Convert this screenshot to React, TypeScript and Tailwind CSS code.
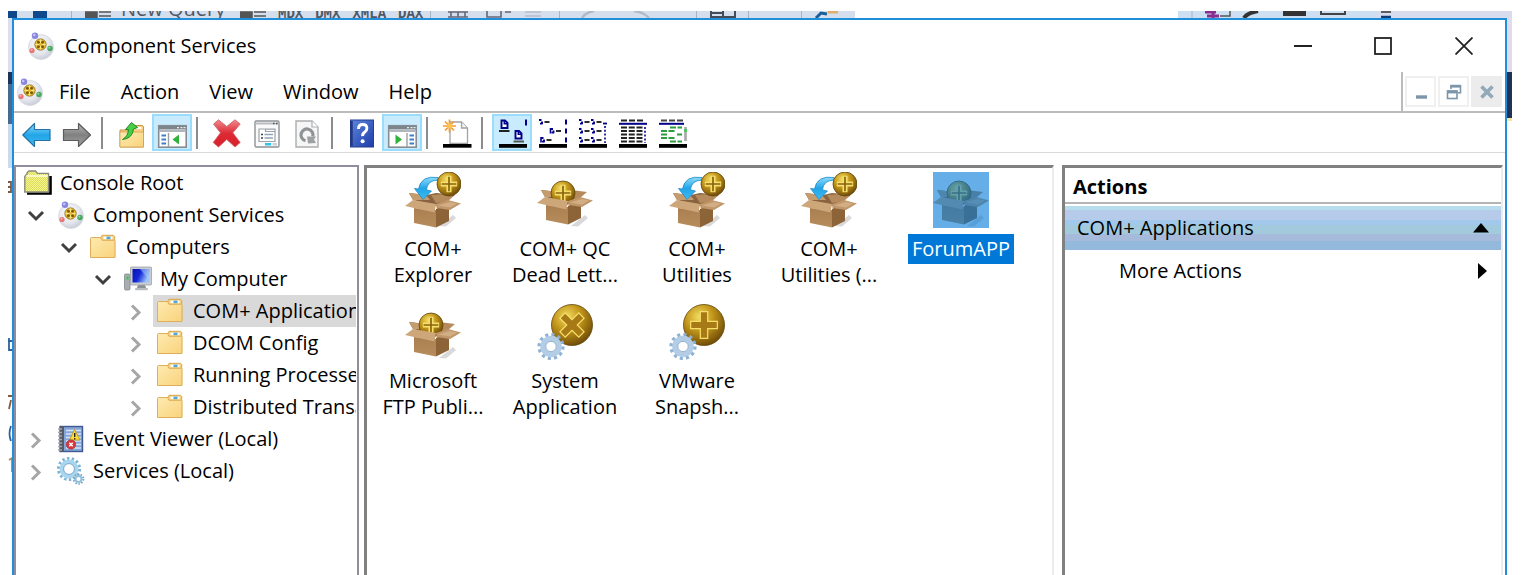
import React from "react";

/* ---------- shared gradients ---------- */

function Defs() {
  return (
    <svg width="0" height="0" className="absolute" aria-hidden="true">
      <defs>
        <radialGradient id="coin" cx="0.38" cy="0.3" r="0.75">
          <stop offset="0" stopColor="#f3dc62" />
          <stop offset="0.45" stopColor="#c2961a" />
          <stop offset="1" stopColor="#6b4706" />
        </radialGradient>
        <linearGradient id="boxFront" x1="0" y1="0" x2="0" y2="1">
          <stop offset="0" stopColor="#a97f52" />
          <stop offset="1" stopColor="#b88d5c" />
        </linearGradient>
        <linearGradient id="blueArrow" x1="0" y1="0" x2="0" y2="1">
          <stop offset="0" stopColor="#8fdcf8" />
          <stop offset="0.5" stopColor="#22a5e8" />
          <stop offset="1" stopColor="#3cbcf2" />
        </linearGradient>
        <linearGradient id="grayArrow" x1="0" y1="0" x2="0" y2="1">
          <stop offset="0" stopColor="#b8b8b8" />
          <stop offset="0.5" stopColor="#808080" />
          <stop offset="1" stopColor="#a4a4a4" />
        </linearGradient>
        <linearGradient id="folder" x1="0" y1="0" x2="1" y2="1">
          <stop offset="0" stopColor="#fdeab0" />
          <stop offset="1" stopColor="#fad37c" />
        </linearGradient>
        <linearGradient id="redX" x1="0" y1="0" x2="0" y2="1">
          <stop offset="0" stopColor="#f08a8e" />
          <stop offset="0.5" stopColor="#dd2a34" />
          <stop offset="1" stopColor="#d8202b" />
        </linearGradient>
        <linearGradient id="helpBlue" x1="0" y1="0" x2="1" y2="1">
          <stop offset="0" stopColor="#5f86e0" />
          <stop offset="1" stopColor="#1c3da6" />
        </linearGradient>
        <linearGradient id="screen" x1="0" y1="0" x2="1" y2="0.4">
          <stop offset="0" stopColor="#0a14a8" />
          <stop offset="0.5" stopColor="#1428d8" />
          <stop offset="1" stopColor="#9cc4f8" />
        </linearGradient>
        <radialGradient id="disc" cx="0.4" cy="0.35" r="0.7">
          <stop offset="0" stopColor="#fafafc" />
          <stop offset="0.6" stopColor="#e6e8ee" />
          <stop offset="1" stopColor="#c4c9d4" />
        </radialGradient>
        <pattern id="dither" width="2" height="2" patternUnits="userSpaceOnUse">
          <rect width="2" height="2" fill="#f6f68c" />
          <rect width="1" height="1" fill="#dcdc5c" />
          <rect x="1" y="1" width="1" height="1" fill="#dcdc5c" />
        </pattern>
      </defs>
    </svg>
  );
}

/* ---------- small icons ---------- */

function ComponentIcon() {
  return (
    <svg width="28" height="28" viewBox="0 0 28 28" aria-hidden="true">
      <ellipse cx="14" cy="15" rx="12.500" ry="12.500" fill="url(#disc)" stroke="#d4d7de" strokeWidth="0.8" />
      <circle cx="13.500" cy="12.500" r="5.600" fill="#eabf2c" stroke="#8c6a14" strokeWidth="0.900" />
      <path d="M13.500 7.500v3.500M13.500 14v3.500M8.500 12.500h3.500M15 12.500h3.500" stroke="#fbe78a" strokeWidth="1.500" />
      <path d="M10.500 9.500q2-1.500 2 1.500q-3 1-2-1.500M16.500 9.500q-2-1.500-2 1.500q3 1 2-1.500M10.500 15.500q2 1.500 2-1.500q-3-1-2 1.500M16.500 15.500q-2 1.500-2-1.500q3-1 2 1.500" fill="#7a5608" stroke="#7a5608" strokeWidth="0.800" />
      <circle cx="8" cy="3.800" r="3.200" fill="#8886e0" />
      <circle cx="7.200" cy="3" r="1.300" fill="#c3c3f6" />
      <circle cx="5" cy="18.500" r="2.600" fill="#e87474" />
      <circle cx="4.600" cy="17.800" r="1" fill="#f8b4b4" />
      <circle cx="23" cy="16.500" r="2.700" fill="#48a860" />
      <circle cx="22.400" cy="15.800" r="1" fill="#93d8a4" />
    </svg>
  );
}

function ConsoleFolderIcon() {
  return (
    <svg width="28" height="28" viewBox="0 0 28 28" aria-hidden="true">
      <path d="M3 24.500h23.500V7" fill="none" stroke="#000" strokeWidth="2.600" />
      <path d="M.8 7.500l2.400-3V3.600L5 2h6.500l2 2.400h11V23H.8z" fill="url(#dither)" stroke="#8a8a7c" strokeWidth="1.400" />
      <path d="M2.200 7h21.600" stroke="#fdfde0" strokeWidth="1.600" />
    </svg>
  );
}

function FolderIcon() {
  return (
    <svg width="28" height="28" viewBox="1 0 28 28" aria-hidden="true">
      <path d="M11.500 5l1.500-2.700h11.500l1.200 1.200V24H2z" fill="#f6cf7a" stroke="#d9a64c" strokeWidth="1" />
      <rect x="14.500" y="3.600" width="9" height="2.600" fill="#fff" />
      <rect x="17.500" y="3.600" width="4" height="2.600" fill="#4aa8dc" />
      <path d="M1.500 5.500q0-1 1-1h9l1.500 2.800h12.200q.8 0 .8 1V24.500h-24.500z" fill="url(#folder)" stroke="#dfae58" strokeWidth="1" />
    </svg>
  );
}

function ComputerIcon() {
  return (
    <svg width="28" height="28" viewBox="0 0 28 28" aria-hidden="true">
      <rect x="0.500" y="9" width="5.500" height="16" rx="1.200" fill="#a9adb2" stroke="#85898f" strokeWidth="0.8" />
      <rect x="2.500" y="11.500" width="2" height="3" fill="#2ccf3c" />
      <path d="M14 20h7l1.500 4H12.500z" fill="#8d9197" />
      <rect x="11" y="23" width="13" height="2.300" rx="1" fill="#b8bcc1" />
      <rect x="6.500" y="2" width="21" height="18" rx="0.800" fill="#c9ccd0" stroke="#9da1a6" strokeWidth="0.8" />
      <rect x="8.500" y="4" width="17" height="13.500" fill="url(#screen)" />
      <path d="M16 4h9.500v11.500z" fill="#a9c8f4" opacity="0.550" />
    </svg>
  );
}

function EventViewerIcon() {
  return (
    <svg width="28" height="28" viewBox="0 0 28 28" aria-hidden="true">
      <rect x="3" y="1.500" width="22.500" height="25" fill="#85a6d8" stroke="#3f5a92" strokeWidth="1.400" />
      <path d="M9 5.500h15M9 9h15M9 12.500h15M9 16h15M9 19.500h15M9 23h15" stroke="#d6e4f6" strokeWidth="1.400" />
      <rect x="3" y="1.500" width="4" height="25" fill="#565b66" />
      <path d="M1 4h4M1 7.500h4M1 11h4M1 14.500h4M1 18h4M1 21.500h4M1 25h4" stroke="#a4a8b0" strokeWidth="1.400" />
      <path d="M17.500 4.500L23 15H12.500z" fill="#fbdc3a" stroke="#c19a10" strokeWidth="0.900" />
      <path d="M17.700 8v4M17.700 13v1.400" stroke="#222" strokeWidth="1.400" />
      <circle cx="14" cy="19.500" r="4.600" fill="#d93a40" stroke="#a82028" strokeWidth="0.700" />
      <path d="M12.300 17.800l3.400 3.400M15.700 17.800l-3.400 3.400" stroke="#fff" strokeWidth="1.400" />
    </svg>
  );
}

function ServicesIcon() {
  return (
    <svg width="28" height="28" viewBox="0 0 28 28" aria-hidden="true">
      <circle cx="12" cy="12" r="10.600" fill="none" stroke="#7db2d4" strokeWidth="3" strokeDasharray="2.400 2.360" />
      <circle cx="12" cy="12" r="7.400" fill="#fff" stroke="#a8d6ee" strokeWidth="4" />
      <circle cx="12" cy="12" r="5.400" fill="#fff" stroke="#6f9fc2" strokeWidth="0.900" />
      <circle cx="21.500" cy="22" r="4.800" fill="none" stroke="#7ba9c8" strokeWidth="2" strokeDasharray="1.500 1.510" />
      <circle cx="21.500" cy="22" r="3" fill="#fff" stroke="#94c0dc" strokeWidth="2" />
    </svg>
  );
}

/* ---------- toolbar icons ---------- */

function ToolSvg({ children }: { children: React.ReactNode }) {
  return (
    <svg width="30" height="30" viewBox="0 0 30 30" aria-hidden="true">
      {children}
    </svg>
  );
}

const BackGlyph = () => (
  <ToolSvg>
    <path d="M.8 17L12.500 5.500V11.500H28V22.500H12.500V28.500z" fill="url(#blueArrow)" stroke="#2472a8" strokeWidth="1.200" strokeLinejoin="round" />
  </ToolSvg>
);

const ForwardGlyph = () => (
  <ToolSvg>
    <path d="M28.500 17L16.500 5.500V11.500H1.500V22.500H16.500V28.500z" fill="url(#grayArrow)" stroke="#5c5c5c" strokeWidth="1.200" strokeLinejoin="round" />
  </ToolSvg>
);

const UpFolderGlyph = () => (
  <ToolSvg>
    <path d="M3 12h9l2-4.500h11.500l1 1.500V29H3z" fill="#f8cf80" stroke="#c79846" strokeWidth="1" />
    <path d="M3 14h23.500v15H3z" fill="url(#folder)" stroke="#cfa254" strokeWidth="0.800" />
    <rect x="19" y="9" width="5.500" height="2" fill="#fff" />
    <path d="M5.500 21.500Q11 18.500 11.500 11.500H8.500L14.500 4.500L20.500 9.500L16.500 11Q15.500 20.500 5.500 21.500z" fill="#46cf46" stroke="#1d8a26" strokeWidth="1" strokeLinejoin="round" />
  </ToolSvg>
);

const TreePaneGlyph = () => (
  <ToolSvg>
    <rect x="1.700" y="7.700" width="27.500" height="21.500" fill="#fff" stroke="#878c92" strokeWidth="1.600" />
    <path d="M2 8h27v3.500H2z" fill="#7c848c" />
    <path d="M20 9.600h2M23.500 9.600h2M26.500 9.600h2" stroke="#e8ecf0" strokeWidth="1.200" />
    <path d="M2 13h27" stroke="#b0b6bc" strokeWidth="2" />
    <path d="M11.500 15v14" stroke="#9aa0a6" strokeWidth="1.400" />
    <path d="M4.500 17.500h4.500M4.500 21.500h4.500M4.500 25.500h4.500" stroke="#3c7fc4" strokeWidth="2" />
    <path d="M22 16.500v10l-6.500-5z" fill="#2fb23a" />
  </ToolSvg>
);

const ActionPaneGlyph = () => (
  <ToolSvg>
    <rect x="1.700" y="7.700" width="27.500" height="21.500" fill="#fff" stroke="#878c92" strokeWidth="1.600" />
    <path d="M2 8h27v3.500H2z" fill="#7c848c" />
    <path d="M20 9.600h2M23.500 9.600h2M26.500 9.600h2" stroke="#e8ecf0" strokeWidth="1.200" />
    <path d="M2 13h27" stroke="#b0b6bc" strokeWidth="2" />
    <path d="M20 15v14" stroke="#9aa0a6" strokeWidth="1.400" />
    <path d="M22.500 17.500h4.500M22.500 21.500h4.500M22.500 25.500h4.500" stroke="#3c7fc4" strokeWidth="2" />
    <path d="M8.500 16.500v10l6.500-5z" fill="#2fb23a" />
  </ToolSvg>
);

const DeleteGlyph = () => (
  <ToolSvg>
    <path d="M1.500 6L6.500 1.800L14.700 8.500L23 1.800L28.200 6L20.800 14.800L28.200 24.500L23 29L14.700 21.500L6.500 29L1.200 24.500L8.500 14.800z" fill="url(#redX)" stroke="#d0646c" strokeWidth="0.900" strokeLinejoin="round" />
  </ToolSvg>
);

const PropertiesGlyph = () => (
  <ToolSvg>
    <rect x="3" y="3" width="24" height="26" rx="1.200" fill="#fafafa" stroke="#8e9296" strokeWidth="1.400" />
    <path d="M3.500 5.500h23" stroke="#b8bcc0" strokeWidth="2" />
    <path d="M21 5.500h1.500M24 5.500h1.500" stroke="#4c5258" strokeWidth="1.400" />
    <path d="M7 23.500V11h6.500v2.500h9.500v10z" fill="#fff" stroke="#9da3a9" strokeWidth="1.200" />
    <path d="M14 11.200h9v2" fill="none" stroke="#9da3a9" strokeWidth="1.200" />
    <path d="M9 16.500h2M9 20h2" stroke="#3b4248" strokeWidth="1.500" />
    <path d="M12.500 16.500h8.500M12.500 20h8.500" stroke="#8fa4b8" strokeWidth="1.500" />
    <rect x="13" y="25" width="6" height="2.500" fill="#2fc4ea" />
    <rect x="20.500" y="25" width="4.500" height="2.500" fill="#ccd2d6" />
  </ToolSvg>
);

const RefreshGlyph = () => (
  <ToolSvg>
    <path d="M4 3h16l6 6v20H4z" fill="#f6f6f6" stroke="#aaadb0" strokeWidth="1.400" />
    <path d="M20 3v6h6" fill="#fff" stroke="#aaadb0" strokeWidth="1.200" />
    <path d="M13.500 22.800A6 6 0 1 1 20.800 18.500" fill="none" stroke="#8f9396" strokeWidth="3.200" />
    <path d="M15 18.500h9l-2 3 2 3.500-8 .5z" fill="#9da1a4" />
  </ToolSvg>
);

const HelpGlyph = () => (
  <ToolSvg>
    <rect x="3.500" y="2" width="23" height="27" fill="url(#helpBlue)" stroke="#24408e" strokeWidth="1" />
    <path d="M4.500 3v25" stroke="#223880" strokeWidth="2.500" />
    <path d="M11.500 11q0-4.500 4.200-4.500t4.200 3.800q0 2.400-2.300 3.900t-2 4" fill="none" stroke="#fff" strokeWidth="2.900" />
    <circle cx="15.600" cy="23.300" r="2" fill="#fff" />
  </ToolSvg>
);

const NewDocGlyph = () => (
  <ToolSvg>
    <path d="M8 4h11.500l6 6v15.500H8z" fill="#fff" stroke="#a2a2a2" strokeWidth="1.300" />
    <path d="M19.500 4v6h6" fill="#f0f0f0" stroke="#a2a2a2" strokeWidth="1.300" />
    <rect x="1" y="26" width="28.500" height="3.700" fill="#000" />
    <path d="M7.500 1.500v13M1 8h13M3 3.500l9 9M12 3.500l-9 9" stroke="#f79a2c" strokeWidth="1.700" />
    <circle cx="7.500" cy="8" r="2.700" fill="#ffc24c" />
  </ToolSvg>
);

const Doc = ({ x, y }: { x: number; y: number }) => (
  <g transform={`translate(${x} ${y})`}>
    <path d="M0 0h3.500l2.500 2.500v5H0z" fill="#fff" stroke="#00008b" strokeWidth="1.900" />
    <path d="M2.800 0v3.200h3.200" fill="none" stroke="#00008b" strokeWidth="1.500" />
  </g>
);
const Base = () => <rect x="2" y="26" width="28" height="3.800" fill="#000" />;

const LargeIconsGlyph = () => (
  <ToolSvg>
    <Doc x={4.500} y={2.500} />
    <path d="M2 13h10.500" stroke="#222" strokeWidth="2" />
    <Doc x={18.500} y={13} />
    <path d="M16.500 23.500h10.500" stroke="#555" strokeWidth="2" />
    <path d="M29 1.500v6" stroke="#00008b" strokeWidth="2" />
    <Base />
  </ToolSvg>
);

const Mini = ({ x, y }: { x: number; y: number }) => (
  <>
    <path d={`M${x} ${y}h2.500M${x + 1} ${y + 3.600}h2.600M${x + 3} ${y + 1.500}v2.500`} fill="none" stroke="#00008b" strokeWidth="1.900" />
    <path d={`M${x + 5.500} ${y + 2}h5`} stroke="#222" strokeWidth="1.900" />
  </>
);

const SmallIconsGlyph = () => (
  <ToolSvg>
    <Mini x={2} y={2} />
    <Mini x={13.500} y={11} />
    <Mini x={4} y={20} />
    <path d="M13.500 10v5.500M4 19v5.500" stroke="#00008b" strokeWidth="1.600" />
    <path d="M29 1.500v5M29 10.500v5M29 19.500v5" stroke="#00008b" strokeWidth="2" />
    <Base />
  </ToolSvg>
);

const ListGlyph = () => (
  <ToolSvg>
    {[2, 11, 20].map((y) => (
      <g key={y}>
        <Mini x={2} y={y} />
        <Mini x={14} y={y} />
      </g>
    ))}
    <path d="M26 5.500h4" stroke="#00008b" strokeWidth="1.800" />
    <path d="M28 8v17" stroke="#00008b" strokeWidth="1.600" strokeDasharray="2 1.800" />
    <Base />
  </ToolSvg>
);

const DetailGlyph = () => (
  <ToolSvg>
    <path d="M4 2.500h22" stroke="#222" strokeWidth="2" strokeDasharray="6 2" />
    <path d="M2 5.800h28" stroke="#00008b" strokeWidth="2" />
    {[9.5, 13, 16.5, 20, 23.5].map((y) => (
      <path key={y} d={`M4 ${y}h21.500`} stroke="#222" strokeWidth="2.200" strokeDasharray="6 1.750" />
    ))}
    <path d="M28 9v16" stroke="#00008b" strokeWidth="1.600" strokeDasharray="2 1.800" />
    <Base />
  </ToolSvg>
);

const StatusGlyph = () => (
  <ToolSvg>
    <path d="M4 2.500h22" stroke="#444" strokeWidth="2" strokeDasharray="6 2" />
    <path d="M2 5.800h25" stroke="#00008b" strokeWidth="2" />
    <path d="M13 9.500h12M4 13h14M4 16.500h6M20 16.500h5M4 20h14M13 23.500h12" stroke="#2f9c40" strokeWidth="2.200" strokeDasharray="6 1.500" />
    <path d="M28.500 9v14" stroke="#a8a8a8" strokeWidth="2.600" />
    <path d="M28.500 11v3" stroke="#35d050" strokeWidth="2.600" />
    <Base />
  </ToolSvg>
);

/* ---------- application icons ---------- */

function Coin({ cx, cy, r, turn = 0 }: { cx: number; cy: number; r: number; turn?: number }) {
  const big = r > 15;
  const a = r * 0.68;
  const b = a - (big ? 1.2 : 0.8);
  return (
    <g>
      <circle cx={cx} cy={cy} r={r} fill="url(#coin)" stroke="#5f450a" strokeWidth="0.800" />
      <g transform={`rotate(${turn} ${cx} ${cy})`}>
        <path d={`M${cx} ${cy - a}v${2 * a}M${cx - a} ${cy}h${2 * a}`} stroke="#f6de6c" strokeWidth={r * 0.42} />
        <path
          d={`M${cx} ${cy - b}v${2 * b}M${cx - b} ${cy}h${2 * b}`}
          stroke={big ? "#a87a16" : "#8a640e"}
          strokeWidth={big ? r * 0.3 : r * 0.14}
        />
      </g>
    </g>
  );
}

function BoxIcon({ arrow }: { arrow?: boolean }) {
  return (
    <svg width="56" height="56" viewBox="0 0 56 56" aria-hidden="true">
      <path d="M34 54L48 43L51 46L41 54.500z" fill="#c9c9cc" opacity="0.700" />
      <g transform={arrow ? undefined : "translate(0 -3)"}>
        <path d="M4 21l18 2 9-2 11 1 2 7-13 5-23-6z" fill="#8a6440" />
        <path d="M4 21l17 2 4 5-17 0z" fill="#c49c6e" />
        <path d="M26 23l16-1 8 1-7 6-12 2z" fill="#b58a5c" />
        {!arrow && <Coin cx={26} cy={24} r={12} />}
        <path d="M9 36L31 38V55.500L9 51z" fill="url(#boxFront)" />
        <path d="M31 37L44 30V49L31 55.500z" fill="#8d6338" />
        <path d="M0 34L8 28L31 32L29.500 40.500z" fill="#cda67a" />
        <path d="M31 32L43 28L56 31.500L45 38L31.500 36z" fill="#c0976a" />
        <path d="M33 33.500L45 30L52 31.500L45 35.500z" fill="#d3ae84" />
      </g>
      {arrow && (
        <>
          <path d="M33 5.500Q16 3 13.500 17L9.500 16.500L18 27.500L26.500 19L21.500 18Q22 8.500 33 8z" fill="url(#blueArrow)" stroke="#1c8ccc" strokeWidth="0.800" />
          <Coin cx={44} cy={12} r={12} />
        </>
      )}
    </svg>
  );
}

function CoinGearIcon({ turn = 0 }: { turn?: number }) {
  return (
    <svg width="56" height="56" viewBox="0 0 56 56" aria-hidden="true">
      <Coin cx={35} cy={21} r={20.5} turn={turn} />
      <circle cx="14" cy="42.500" r="11.800" fill="none" stroke="#8fb2d4" strokeWidth="3.600" strokeDasharray="3.090 3.090" />
      <circle cx="14" cy="42.500" r="8" fill="#fff" stroke="#b3cde6" strokeWidth="5.500" />
      <circle cx="14" cy="42.500" r="5.200" fill="#fff" stroke="#8aa9c8" strokeWidth="0.900" />
    </svg>
  );
}

/* ---------- toolbar ---------- */

type Tool = { label: string; Glyph: () => React.JSX.Element; on?: boolean };

const toolGroups: Tool[][] = [
  [
    { label: "Back", Glyph: BackGlyph },
    { label: "Forward", Glyph: ForwardGlyph },
  ],
  [
    { label: "Up one level", Glyph: UpFolderGlyph },
    { label: "Show or hide console tree", Glyph: TreePaneGlyph, on: true },
  ],
  [
    { label: "Delete", Glyph: DeleteGlyph },
    { label: "Properties", Glyph: PropertiesGlyph },
    { label: "Refresh", Glyph: RefreshGlyph },
  ],
  [
    { label: "Help", Glyph: HelpGlyph },
    { label: "Show or hide action pane", Glyph: ActionPaneGlyph, on: true },
  ],
  [{ label: "New application", Glyph: NewDocGlyph }],
  [
    { label: "Large icons", Glyph: LargeIconsGlyph, on: true },
    { label: "Small icons", Glyph: SmallIconsGlyph },
    { label: "List view", Glyph: ListGlyph },
    { label: "Detail view", Glyph: DetailGlyph },
    { label: "Status view", Glyph: StatusGlyph },
  ],
];

function Toolbar() {
  return (
    <div role="toolbar" aria-label="Standard" className="flex h-10 items-center border-b border-[#d9d9d9] pl-[3px]">
      {toolGroups.map((group, i) => (
        <React.Fragment key={i}>
          {i > 0 && (
            <div className="flex w-[15px] pl-1">
              <span className="h-8 w-[2px] bg-[#8c8c8c]" />
            </div>
          )}
          {group.map(({ label, Glyph, on }) => (
            <button
              key={label}
              type="button"
              aria-label={label}
              aria-pressed={on ? true : undefined}
              className={
                "flex h-[37px] w-10 items-center justify-center border-2 " +
                (on ? "border-[#99dcfb] bg-[#c8ecfd]" : "border-transparent")
              }
            >
              <Glyph />
            </button>
          ))}
        </React.Fragment>
      ))}
    </div>
  );
}

/* ---------- console tree ---------- */

type Node = { label: string; level: number; Icon: () => React.JSX.Element; open?: boolean; selected?: boolean };

const nodes: Node[] = [
  { label: "Console Root", level: 0, Icon: ConsoleFolderIcon },
  { label: "Component Services", level: 1, Icon: ComponentIcon, open: true },
  { label: "Computers", level: 2, Icon: FolderIcon, open: true },
  { label: "My Computer", level: 3, Icon: ComputerIcon, open: true },
  { label: "COM+ Applications", level: 4, Icon: FolderIcon, open: false, selected: true },
  { label: "DCOM Config", level: 4, Icon: FolderIcon, open: false },
  { label: "Running Processes", level: 4, Icon: FolderIcon, open: false },
  { label: "Distributed Transaction Coordinator", level: 4, Icon: FolderIcon, open: false },
  { label: "Event Viewer (Local)", level: 1, Icon: EventViewerIcon, open: false },
  { label: "Services (Local)", level: 1, Icon: ServicesIcon, open: false },
];

const indents = ["pl-1", "pl-2", "pl-[41px]", "pl-[75px]", "pl-[108px]"];

function Tree() {
  return (
    <div className="flex w-[345px] shrink-0 border-2 border-b-0 border-[#8e8e9e] pr-px">
      <ul role="tree" aria-label="Console tree" className="min-w-0 flex-1 overflow-hidden">
        {nodes.map(({ label, level, Icon, open, selected }) => (
          <li
            key={label}
            role="treeitem"
            aria-level={level + 1}
            aria-selected={!!selected}
            aria-expanded={open}
            className={"flex h-8 items-stretch " + indents[level]}
          >
            {open !== undefined && (
              <span className="flex w-[29px] shrink-0 items-center">
                <svg width="24" height="24" viewBox="0 0 24 24" fill="none" strokeWidth="3" aria-hidden="true">
                  {open ? (
                    <path d="M5 9l7 7 7-7" stroke="#404040" />
                  ) : (
                    <path d="M8 6.500l7 7-7 7" stroke="#a6a6a6" />
                  )}
                </svg>
              </span>
            )}
            <span className={"flex flex-1 items-center gap-2 whitespace-nowrap pl-1 " + (selected ? "bg-[#d9d9d9]" : "")}>
              <span className="shrink-0">
                <Icon />
              </span>
              {label}
            </span>
          </li>
        ))}
      </ul>
    </div>
  );
}

/* ---------- application list ---------- */

type AppItem = { lines: string[]; icon: React.JSX.Element; selected?: boolean };

const apps: AppItem[] = [
  { lines: ["COM+", "Explorer"], icon: <BoxIcon arrow /> },
  { lines: ["COM+ QC", "Dead Lett..."], icon: <BoxIcon /> },
  { lines: ["COM+", "Utilities"], icon: <BoxIcon arrow /> },
  { lines: ["COM+", "Utilities (..."], icon: <BoxIcon arrow /> },
  { lines: ["ForumAPP"], icon: <BoxIcon />, selected: true },
  { lines: ["Microsoft", "FTP Publi..."], icon: <BoxIcon /> },
  { lines: ["System", "Application"], icon: <CoinGearIcon turn={45} /> },
  { lines: ["VMware", "Snapsh..."], icon: <CoinGearIcon /> },
];

function AppList() {
  return (
    <ul
      aria-label="COM+ Applications"
      className="flex min-w-0 flex-1 flex-wrap content-start border-t-[3px] border-r-2 border-l-[3px] border-t-[#808080] border-r-[#ececec] border-l-[#808080] pt-1"
    >
      {apps.map(({ lines, icon, selected }) => (
        <li key={lines.join(" ")} className="flex h-33 w-33 flex-col items-center gap-[6px]">
          <span className="relative">
            {icon}
            {selected && <span className="absolute inset-0 bg-[#0078d7]/60" />}
          </span>
          <span
            className={
              "px-1 py-[2px] text-center leading-[26px] " + (selected ? "bg-[#0078d7] text-white" : "")
            }
          >
            {lines.map((line) => (
              <span key={line} className="block whitespace-nowrap">
                {line}
              </span>
            ))}
          </span>
        </li>
      ))}
    </ul>
  );
}

/* ---------- actions pane ---------- */

function Actions() {
  return (
    <section
      aria-label="Actions"
      className="w-[441px] shrink-0 border-t-[3px] border-r-2 border-l-[3px] border-t-[#808080] border-r-[#ececec] border-l-[#808080]"
    >
      <h2 className="flex h-9 items-center border-b-2 border-[#b4b4b4] pt-1 pl-2 font-bold">Actions</h2>
      <button
        type="button"
        className="mt-[2px] flex h-11 w-full items-center justify-between bg-[linear-gradient(180deg,#b7dcee_0px,#b7dcee_4px,#b6caea_4px,#b6caea_14px,#a2c9ec_14px,#a2c9ec_19px,#a2cadc_19px,#a2cadc_28px,#a6bbdc_28px,#a6bbdc_35px,#93badc_35px)] pr-3 pl-3"
      >
        COM+ Applications
        <svg width="16" height="10" viewBox="0 0 16 10" aria-hidden="true">
          <path d="M8 0L16 9.500H0z" fill="#000" />
        </svg>
      </button>
      <button type="button" className="flex h-[42px] w-full items-center justify-between pr-[14px] pl-[54px]">
        More Actions
        <svg width="9" height="16" viewBox="0 0 9 16" aria-hidden="true">
          <path d="M0 0L9 8L0 16z" fill="#000" />
        </svg>
      </button>
    </section>
  );
}

/* ---------- window chrome ---------- */

function TitleBar() {
  return (
    <header className="flex h-[52px] items-center pl-[13px]">
      <ComponentIcon />
      <h1 className="flex-1 pl-[10px]">Component Services</h1>
      <button type="button" aria-label="Minimize" className="flex h-10 w-20 items-center justify-center">
        <svg width="18" height="18" viewBox="0 0 18 18" aria-hidden="true">
          <path d="M0 9h18" stroke="#222" strokeWidth="2" />
        </svg>
      </button>
      <button type="button" aria-label="Maximize" className="flex h-10 w-20 items-center justify-center">
        <svg width="18" height="18" viewBox="0 0 18 18" aria-hidden="true">
          <rect x="1" y="1" width="16" height="16" fill="none" stroke="#222" strokeWidth="1.800" />
        </svg>
      </button>
      <button type="button" aria-label="Close" className="flex h-10 w-[82px] items-center justify-center">
        <svg width="18" height="18" viewBox="0 0 18 18" aria-hidden="true">
          <path d="M.5 .5l17 17M17.500 .5l-17 17" stroke="#222" strokeWidth="1.800" />
        </svg>
      </button>
    </header>
  );
}

function MenuBar() {
  return (
    <div className="flex h-[41px] items-stretch border-b-2 border-[#bcbcbc]">
      <div className="flex items-center pl-[2px]">
        <ComponentIcon />
      </div>
      <nav aria-label="Menu" className="flex flex-1 items-center">
        {["File", "Action", "View", "Window", "Help"].map((item) => (
          <button key={item} type="button" className="px-[15px]">
            {item}
          </button>
        ))}
      </nav>
      <div className="flex items-center gap-[2px] border-l-2 border-[#bcbcbc] pr-[3px] pl-[2px]">
        <button type="button" aria-label="Minimize child window" className="flex size-[31px] items-center justify-center border-2 border-[#f0f0f0]">
          <svg width="16" height="16" viewBox="0 0 16 16" aria-hidden="true">
            <path d="M3 13h11" stroke="#7c95a8" strokeWidth="3.400" />
          </svg>
        </button>
        <button type="button" aria-label="Restore child window" className="flex size-[31px] items-center justify-center border-2 border-[#f0f0f0]">
          <svg width="16" height="16" viewBox="0 0 16 16" fill="none" stroke="#7c95a8" aria-hidden="true">
            <path d="M5 5V1.800h9.500v7H12" strokeWidth="1.600" />
            <path d="M4.500 2.200h10.500" strokeWidth="2.800" />
            <rect x="1.500" y="7" width="9.500" height="7.500" strokeWidth="1.600" />
            <path d="M1 8h10.500" strokeWidth="2.800" />
          </svg>
        </button>
        <button type="button" aria-label="Close child window" className="flex size-[31px] items-center justify-center bg-[#ececec]">
          <svg width="16" height="16" viewBox="0 0 16 16" aria-hidden="true">
            <path d="M2.500 2.500l11 11M13.500 2.500l-11 11" stroke="#92a9ba" strokeWidth="3.600" />
          </svg>
        </button>
      </div>
    </div>
  );
}

/* ---------- editor window behind ---------- */

const Divider = () => <span className="h-full w-px shrink-0 bg-[#a9b3c4]" />;

function BackdropToolbar() {
  return (
    <div aria-hidden="true" className="flex h-[7px] justify-between overflow-hidden text-[#505866]">
      <div className="flex w-[847px] shrink-0 items-end bg-[#d4deed]">
        <span className="h-full w-[9px] shrink-0 bg-[#10488c]" />
        <span className="ml-4 h-full w-[14px] shrink-0 bg-[#10488c]" />
        <span className="w-6 shrink-0" />
        <Divider />
        <svg className="ml-[13px] shrink-0" width="26" height="7" viewBox="0 0 26 7">
          <path d="M0 1h12v6H0zM14 1h12M14 5h12" fill="#555" stroke="#555" strokeWidth="1.500" />
        </svg>
        <span className="ml-[10px] w-[119px] shrink-0 leading-[18px] whitespace-nowrap">New Query</span>
        <svg className="shrink-0" width="26" height="7" viewBox="0 0 26 7">
          <path d="M0 1h12v6H0zM14 1h12M14 5h12" fill="#555" stroke="#555" strokeWidth="1.500" />
        </svg>
        <span className="ml-3 flex w-[152px] shrink-0 gap-3 font-['Liberation_Mono',monospace] text-[14px] leading-[8px] font-bold">
          <span>MDX</span>
          <span>DMX</span>
          <span>XMLA</span>
          <span>DAX</span>
        </span>
        <Divider />
        <svg className="ml-4 shrink-0" width="112" height="7" viewBox="0 0 112 7" fill="none" stroke="#667" strokeWidth="1.600">
          <path d="M1 1h20M4 1v5M11 1v5M18 1v5M1 6h20M40 0v6h14V0M58 1h6" />
          <path d="M78 1h16M78 5h16" stroke="#b8bcc8" />
        </svg>
        <Divider />
        <svg className="ml-5 shrink-0" width="116" height="7" viewBox="0 0 116 7" fill="none" stroke="#b0bac6" strokeWidth="2.400">
          <path d="M2 7q4-6 12-7M54 0q10 1 15 7" />
        </svg>
        <Divider />
        <svg className="ml-3 shrink-0" width="39" height="7" viewBox="0 0 39 7" fill="none" stroke="#444c58" strokeWidth="2">
          <path d="M2 0v6h24V0M14 0v6M3 2h10" />
        </svg>
        <Divider />
        <span className="w-[52px] shrink-0" />
        <Divider />
        <svg className="ml-3 shrink-0" width="28" height="7" viewBox="0 0 28 7" fill="none" strokeWidth="3">
          <path d="M2 7l5-5 6 1" stroke="#1b5f9a" />
          <path d="M14 1h10" stroke="#dfae6c" />
        </svg>
      </div>
      <div className="flex w-[334px] shrink-0 bg-[#d8dcec]">
        <svg width="240" height="7" viewBox="0 0 240 7" fill="none">
          <path d="M0 0h200v7H0z" fill="#cddff0" />
          <path d="M14 0v7" stroke="#a9b3c4" />
          <path d="M27 1h11M29 5h12M35 0v7" stroke="#8a2c8e" strokeWidth="3" />
          <path d="M42 5h10V0" stroke="#555" strokeWidth="1.500" />
          <path d="M66 7q3-5 14-7" stroke="#333" strokeWidth="4" />
          <path d="M105 0h23v5h-23z" fill="#333" />
          <path d="M143 0v3h24V0" stroke="#444" strokeWidth="2" />
          <path d="M203 1h10" stroke="#333" strokeWidth="1.500" />
          <path d="M203 6h10" stroke="#0f3b78" strokeWidth="2.500" />
        </svg>
      </div>
    </div>
  );
}

function BackdropLeft() {
  return (
    <div aria-hidden="true" className="w-1 shrink-0">
      <div className="h-[54px] bg-[#dcdff0]" />
      <div className="h-3 bg-[#1f3358]" />
      <div className="h-10 bg-[#466a90]" />
      <div className="h-11 bg-[#c9dbee]" />
      <svg width="4" height="330" viewBox="0 0 4 330" fill="none" strokeWidth="1.800">
        <path d="M0 14h3v10H0M0 19h3" stroke="#7a5a40" />
        <path d="M1 170v12h3M0 173h4" stroke="#2c62a0" />
        <path d="M0 228h4M3 232l-2 9" stroke="#8a5a34" />
        <path d="M3 258q-3 8 0 15" stroke="#2c62a0" />
        <path d="M1 292l3-2v14" stroke="#b08a3c" />
      </svg>
    </div>
  );
}

function BackdropRight() {
  return (
    <div aria-hidden="true" className="w-[5px] shrink-0">
      <div className="h-[54px] bg-[#dedcee]" />
      <div className="h-[46px] bg-[#1f3358]" />
      <div className="h-[3px] bg-[#fbe6a0]" />
    </div>
  );
}

export default function App() {
  return (
    <div className="flex min-h-screen flex-col bg-white pt-[11px] pr-[11px] pl-2 font-['Open_Sans','Noto_Sans',sans-serif] text-[20px] leading-6 text-black">
      <Defs />
      <BackdropToolbar />
      <div className="flex flex-1">
        <BackdropLeft />
        <main className="flex min-w-0 flex-1 flex-col border-2 border-b-0 border-[#1f8fdc] bg-white">
          <TitleBar />
          <MenuBar />
          <Toolbar />
          <div className="flex flex-1 pt-3 pr-[2px]">
            <Tree />
            <div className="w-[5px] shrink-0" />
            <AppList />
            <div className="w-2 shrink-0" />
            <Actions />
          </div>
        </main>
        <BackdropRight />
      </div>
    </div>
  );
}
